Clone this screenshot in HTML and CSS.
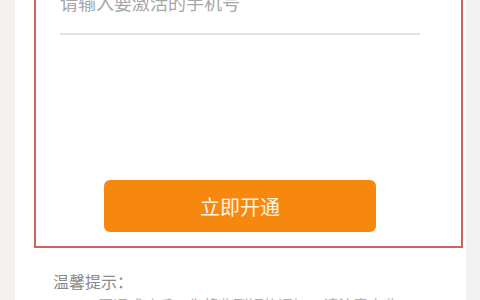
FILE: index.html
```html
<!DOCTYPE html>
<html lang="zh-CN">
<head>
<meta charset="utf-8">
<title>立即开通</title>
<link rel="stylesheet" href="styles.css">
</head>
<body>
<div class="panel">
  <div class="box">
    <div class="field"><span class="placeholder">请输入要激活的手机号</span></div>
    <button class="btn">立即开通</button>
  </div>
  <div class="tips">
    <div class="tips-title">温馨提示：</div>
    <div class="tips-line">1、开通成功后，您将收到短信通知，请注意查收</div>
  </div>
</div>
</body>
</html>
```
FILE: styles.css
```css
html, body {
  margin: 0;
  padding: 0;
  height: 300px;
  overflow: hidden;
  background: #f2f1f0;
  font-family: "Noto Sans CJK SC", "Noto Sans", sans-serif;
}
.panel {
  margin: 0 14px 0 15px;
  background: #fff;
  min-height: 320px;
  padding-left: 19px;
  padding-top: 1px;
}
.box {
  box-sizing: border-box;
  width: 429px;
  margin-top: -41px;
  border: 2px solid #d0625b;
  padding: 28px 0 14px 0;
}
.field {
  margin: 0 41px 0 24px;
  padding-bottom: 19px;
  border-bottom: 2px solid #e3e3e3;
}
.placeholder {
  display: block;
  font-size: 18px;
  line-height: 24px;
  color: #a6a6a6;
}
.btn {
  display: block;
  margin: 145px 0 0 68px;
  width: 272px;
  height: 52px;
  border: none;
  border-radius: 6px;
  background: #f7880f;
  color: #fff4e4;
  font-family: "Noto Sans CJK SC", "Noto Sans", sans-serif;
  font-size: 20px;
  padding: 0;
}
.tips {
  margin: 22px 0 0 19px;
}
.tips-title {
  font-size: 16px;
  line-height: 22px;
  color: #8a8a8a;
}
.tips-line {
  margin-top: 2px;
  padding-left: 22px;
  font-size: 15px;
  line-height: 22px;
  color: #b0b0b0;
  white-space: nowrap;
}
```
